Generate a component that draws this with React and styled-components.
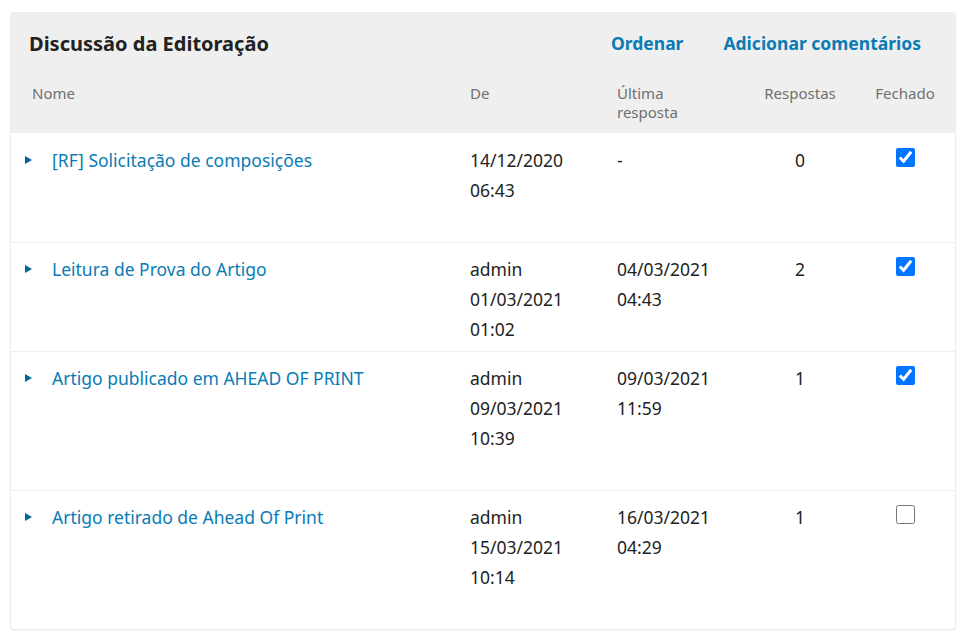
import React from 'react';
import styled, { createGlobalStyle } from 'styled-components';

const GlobalStyle = createGlobalStyle`
    body {
        margin: 0;
        background: #ffffff;
        font-family: "Noto Sans", "Open Sans", sans-serif;
        color: #222222;
    }
`;

const Page = styled.div`
    padding: 13px 13px 12px 11px;
`;

const Card = styled.div`
    width: 944px;
    background: #ffffff;
    border-radius: 3px;
    box-shadow: 0 0 0 1px #ececec, 0 1px 2px rgba(0,0,0,0.18);
    overflow: hidden;
`;

const Head = styled.div`
    background: #efefef;
`;

const TitleBar = styled.div`
    display: flex;
    align-items: center;
    height: 60px;
    padding: 0 34px 0 18px;
`;

const Title = styled.h2`
    flex: 1;
    margin: 0;
    font-size: 20px;
    font-weight: 700;
    color: #222222;
`;

const Actions = styled.div`
    display: flex;
    gap: 40px;
`;

const Action = styled.a`
    font-size: 17.5px;
    font-weight: 700;
    color: #0a7bb5;
    text-decoration: none;
    cursor: pointer;
`;

const Grid = styled.div`
    display: grid;
    grid-template-columns: 459px 147px 120px 126px 84px;
`;

const ColHeads = styled(Grid)`
    height: 60px;
    padding-top: 11px;
    box-sizing: border-box;
`;

const ColHead = styled.div`
    font-size: 15px;
    line-height: 19px;
    color: #6f6f6f;
    padding-left: ${({ $first }) => ($first ? '21px' : '0')};
    text-align: ${({ $center }) => ($center ? 'center' : 'left')};
`;

const Row = styled(Grid)`
    padding: ${({ $top }) => $top}px 0 ${({ $bottom }) => $bottom}px;
    border-top: ${({ $first }) => ($first ? 'none' : '1px solid #eeeeee')};
    font-size: 17.5px;
    line-height: 30px;
`;

const NameCell = styled.div`
    display: flex;
    align-items: flex-start;
    padding-left: 14px;
`;

const Toggle = styled.span`
    width: 0;
    height: 0;
    margin: 11px 20px 0 0;
    border-top: 4.5px solid transparent;
    border-bottom: 4.5px solid transparent;
    border-left: 7px solid #006798;
`;

const NameLink = styled.a`
    color: #0a7bb5;
    text-decoration: none;
    cursor: pointer;
`;

const Cell = styled.div`
    text-align: ${({ $center }) => ($center ? 'center' : 'left')};
    color: #222222;
`;

const Check = styled.input`
    width: 19px;
    height: 19px;
    margin: 1px 0 0;
    accent-color: #0075ff;
`;

const rows = [
    { name: '[RF] Solicitação de composições', from: ['14/12/2020', '06:43'], last: ['-'], replies: 0, closed: true, top: 12, bottom: 37 },
    { name: 'Leitura de Prova do Artigo', from: ['admin', '01/03/2021', '01:02'], last: ['04/03/2021', '04:43'], replies: 2, closed: true, top: 11, bottom: 7 },
    { name: 'Artigo publicado em AHEAD OF PRINT', from: ['admin', '09/03/2021', '10:39'], last: ['09/03/2021', '11:59'], replies: 1, closed: true, top: 11, bottom: 37 },
    { name: 'Artigo retirado de Ahead Of Print', from: ['admin', '15/03/2021', '10:14'], last: ['16/03/2021', '04:29'], replies: 1, closed: false, top: 11, bottom: 37 },
];

const App = () => {
    return (
        <Page>
            <GlobalStyle />
            <Card>
                <Head>
                    <TitleBar>
                        <Title>Discussão da Editoração</Title>
                        <Actions>
                            <Action>Ordenar</Action>
                            <Action>Adicionar comentários</Action>
                        </Actions>
                    </TitleBar>
                    <ColHeads>
                        <ColHead $first>Nome</ColHead>
                        <ColHead>De</ColHead>
                        <ColHead>Última<br />resposta</ColHead>
                        <ColHead $center>Respostas</ColHead>
                        <ColHead $center>Fechado</ColHead>
                    </ColHeads>
                </Head>
                {rows.map((row, index) => (
                    <Row key={row.name} $first={index === 0} $top={row.top} $bottom={row.bottom}>
                        <NameCell>
                            <Toggle />
                            <NameLink>{row.name}</NameLink>
                        </NameCell>
                        <Cell>
                            {row.from.map((line) => (
                                <div key={line}>{line}</div>
                            ))}
                        </Cell>
                        <Cell>
                            {row.last.map((line) => (
                                <div key={line}>{line}</div>
                            ))}
                        </Cell>
                        <Cell $center>{row.replies}</Cell>
                        <Cell $center>
                            <Check type="checkbox" defaultChecked={row.closed} />
                        </Cell>
                    </Row>
                ))}
            </Card>
        </Page>
    );
};

export default App;
